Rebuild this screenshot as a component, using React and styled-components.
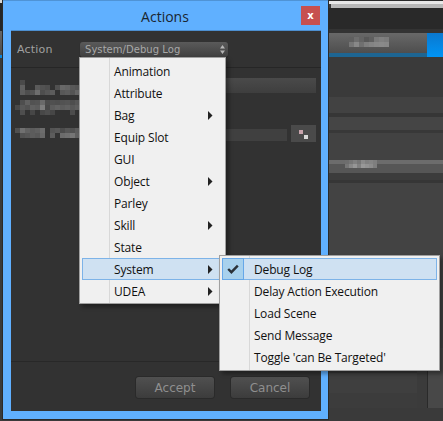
import React from 'react'
import styled, { createGlobalStyle } from 'styled-components'

const menuItems = [
  { label: 'Animation' },
  { label: 'Attribute' },
  { label: 'Bag', sub: true },
  { label: 'Equip Slot' },
  { label: 'GUI' },
  { label: 'Object', sub: true },
  { label: 'Parley' },
  { label: 'Skill', sub: true },
  { label: 'State' },
  { label: 'System', sub: true, active: true },
  { label: 'UDEA', sub: true },
]

const subItems = [
  { label: 'Debug Log', active: true, checked: true },
  { label: 'Delay Action Execution' },
  { label: 'Load Scene' },
  { label: 'Send Message' },
  { label: "Toggle 'can Be Targeted'" },
]

// pixelated (censored) labels, each row is a list of grey values
const labelA = [
  [0, 74, 0, 0, 0, 0, 0, 0, 0, 0, 0, 0, 0, 0, 0, 0],
  [0, 96, 0, 0, 90, 82, 78, 0, 80, 104, 100, 88, 84, 96, 90, 0],
  [0, 92, 78, 84, 110, 78, 86, 92, 0, 88, 92, 84, 100, 92, 112, 72],
]
const labelB = [
  [0, 78, 96, 82, 84, 106, 76, 80, 78, 82, 84, 78, 86, 80, 76, 0],
  [72, 88, 82, 96, 92, 126, 72, 92, 98, 92, 96, 88, 94, 90, 118, 110],
  [0, 78, 0, 70, 0, 72, 78, 70, 0, 0, 0, 76, 0, 0, 0, 0],
]
const labelC = [
  [0, 0, 0, 0, 0, 0, 0, 0, 0, 0, 0, 0, 0, 72, 0, 0],
  [80, 112, 98, 92, 96, 108, 0, 84, 88, 76, 86, 82, 92, 96, 90, 92],
  [0, 82, 86, 92, 88, 104, 0, 92, 0, 108, 112, 118, 96, 108, 102, 96],
]
const blurB = [
  [0, 0, 0, 0, 96, 110, 100, 88, 96, 122, 128, 124, 0, 0, 0, 0],
  [0, 0, 0, 0, 118, 136, 112, 126, 132, 136, 138, 136, 0, 0, 0, 0],
]
const blurC = [
  [0, 0, 0, 0, 110, 118, 128, 118, 138, 128, 132, 126, 0, 0, 0, 0],
  [0, 0, 0, 0, 118, 136, 150, 128, 152, 146, 140, 126, 0, 0, 0, 0],
]

const Mosaic = ({ rows, size = 5 }) => (
  <MosaicSvg width={rows[0].length * size} height={rows.length * size} shapeRendering="crispEdges">
    {rows.map((row, y) =>
      row.map((v, x) =>
        v ? <rect key={x + '-' + y} x={x * size} y={y * size} width={size} height={size} fill={`rgb(${v},${v},${v})`} /> : null
      )
    )}
  </MosaicSvg>
)

const Arrow = () => (
  <ArrowSvg width="5" height="9" viewBox="0 0 5 9">
    <path d="M0 0 L4.5 4.5 L0 9 Z" fill="#222" />
  </ArrowSvg>
)

const Check = () => (
  <svg width="12" height="10" viewBox="0 0 12 10">
    <path d="M1.2 5 L4.4 8.2 L10.8 1.6" fill="none" stroke="#2a3138" strokeWidth="2.4" />
  </svg>
)

const Stepper = () => (
  <svg width="5" height="9" viewBox="0 0 5 9">
    <path d="M2.5 0 L5 3.5 L0 3.5 Z M2.5 9 L5 5.5 L0 5.5 Z" fill="#b5b5b5" />
  </svg>
)

export default function App() {
  return (
    <>
      <GlobalStyle />
      <Desktop>
        <LeftEdge>
          <EdgeLight />
          <EdgeDark />
          <EdgeGray />
          <EdgeBlue />
        </LeftEdge>

        <Window>
          <TitleBar>
            <Title>Actions</Title>
            <CloseButton>x</CloseButton>
          </TitleBar>
          <Content>
            <ActionRow>
              <ActionLabel>Action</ActionLabel>
              <Dropdown>
                <span>System/Debug Log</span>
                <Stepper />
              </Dropdown>
            </ActionRow>
            <Fields>
              <FieldRow>
                <Mosaic rows={labelA} />
                <Field />
              </FieldRow>
              <FieldRow $top={5}>
                <Mosaic rows={labelB} />
              </FieldRow>
              <FieldRow $top={8}>
                <Mosaic rows={labelC} />
                <SmallField />
                <Picker>
                  <PickerDot $c="#c8a4ac" $shift={-2} />
                  <PickerDot $c="#d8d8d8" $shift={3} />
                </Picker>
              </FieldRow>
            </Fields>
            <Footer>
              <GhostButton>Accept</GhostButton>
              <GhostButton>Cancel</GhostButton>
            </Footer>
          </Content>

          <Menu>
            {menuItems.map((item) => (
              <MenuItem key={item.label} $active={item.active}>
                <MenuText>{item.label}</MenuText>
                {item.sub && <Arrow />}
              </MenuItem>
            ))}
          </Menu>

          <SubMenu>
            {subItems.map((item) => (
              <SubItem key={item.label} $active={item.active}>
                <CheckBox $checked={item.checked}>{item.checked && <Check />}</CheckBox>
                <SubText>{item.label}</SubText>
              </SubItem>
            ))}
          </SubMenu>
        </Window>

        <RightPanel>
          <TopStrip />
          <GrayStrip />
          <DarkBand />
          <TabRow>
            <TabMain>
              <TabFace>
                <Mosaic rows={blurB} size={5} />
              </TabFace>
              <TabLine />
            </TabMain>
            <TabBlue />
          </TabRow>
          <Band $h={40} $c="#3a3a3a" />
          <Band $h={16} $c="#424242" />
          <Band $h={4} $c="#363636" />
          <Band $h={13} $c="#454545" />
          <Band $h={3} $c="#383838" />
          <Band $h={27} $c="#424242" />
          <GreyRow>
            <Mosaic rows={blurC} size={4} />
          </GreyRow>
          <Band $h={7} $c="#3c3c3c" />
          <Band $h={3} $c="#363636" />
          <Band $h={165} $c="#434343" />
          <BottomRow>
            <BottomMain>
              <Band $h={25} $c="#353535" />
              <Band $h={20} $c="#3f3f3f" />
            </BottomMain>
            <BottomGap />
            <BottomRail />
          </BottomRow>
        </RightPanel>
      </Desktop>
    </>
  )
}

const GlobalStyle = createGlobalStyle`
  html, body {
    margin: 0;
    padding: 0;
    background: #3a3a3a;
    overflow: hidden;
  }
`

const Desktop = styled.div`
  width: 443px;
  height: 421px;
  display: grid;
  grid-template-columns: 3px 326px 114px;
  align-items: start;
  background: #3a3a3a;
  overflow: hidden;
  position: relative;
`

const LeftEdge = styled.div`
  display: flex;
  flex-direction: column;
`
const EdgeLight = styled.div`
  height: 3px;
  background: #d8d8d8;
`
const EdgeDark = styled.div`
  height: 28px;
  background: #262626;
`
const EdgeGray = styled.div`
  height: 24px;
  background: linear-gradient(#666, #4c4c4c);
`
const EdgeBlue = styled.div`
  height: 3px;
  background: #0a85dc;
`

const Window = styled.div`
  position: relative;
  box-sizing: border-box;
  width: 325px;
  height: 419px;
  display: flex;
  flex-direction: column;
  padding: 0 7px 8px 8px;
  background: #60b0ff;
  border-top: 1px solid #4f93d6;
  box-shadow: 0 0 0 1px #2a2a2a;
`

const TitleBar = styled.div`
  height: 30px;
  flex: none;
  display: flex;
  align-items: center;
  justify-content: space-between;
  position: relative;
`

const Title = styled.div`
  flex: 1;
  text-align: center;
  margin-left: -2px;
  font: 14px "Open Sans", sans-serif;
  color: #1a2530;
`

const CloseButton = styled.div`
  position: absolute;
  right: 1px;
  top: 5px;
  width: 19px;
  height: 19px;
  display: flex;
  align-items: center;
  justify-content: center;
  background: #c75050;
  color: #fff;
  font: bold 10px "DejaVu Sans", sans-serif;
`

const Content = styled.div`
  flex: 1;
  display: flex;
  flex-direction: column;
  background: #323232;
  box-shadow: 0 -1px 0 #4d8fd0;
`

const ActionRow = styled.div`
  height: 37px;
  flex: none;
  box-sizing: border-box;
  display: flex;
  align-items: flex-start;
  padding: 11px 0 0 6px;
  border-bottom: 1px solid #262626;
`

const ActionLabel = styled.div`
  width: 63px;
  font: 11px/15px "DejaVu Sans", sans-serif;
  color: #a0a0a0;
  letter-spacing: 0.2px;
`

const Dropdown = styled.div`
  box-sizing: border-box;
  width: 148px;
  height: 15px;
  display: flex;
  align-items: center;
  justify-content: space-between;
  padding: 0 3px 0 5px;
  border-radius: 3px;
  background: linear-gradient(#5a5a5a, #404040);
  box-shadow: 0 1px 1px #222;
  font: 10px "DejaVu Sans", sans-serif;
  color: #a8a8a8;
  letter-spacing: 0.05px;
`

const Fields = styled.div`
  flex: 1;
  display: flex;
  flex-direction: column;
  padding: 12px 5px 0 4px;
`

const FieldRow = styled.div`
  display: flex;
  align-items: flex-start;
  justify-content: space-between;
  margin-top: ${(p) => p.$top || 0}px;
`

const MosaicSvg = styled.svg`
  display: block;
  flex: none;
`

const Field = styled.div`
  width: 92px;
  height: 15px;
  margin-top: -2px;
  background: linear-gradient(#4a4a4a, #3e3e3e);
`

const SmallField = styled.div`
  width: 62px;
  height: 12px;
  margin: 6px 0 0 auto;
  background: #404040;
`

const Picker = styled.div`
  width: 25px;
  height: 17px;
  margin: 2px 0 0 4px;
  background: #4a4a4a;
  display: flex;
  align-items: center;
  justify-content: center;
  gap: 1px;
`

const PickerDot = styled.div`
  width: 4px;
  height: 4px;
  margin-top: ${(p) => p.$shift * 2}px;
  background: ${(p) => p.$c};
`

const Footer = styled.div`
  flex: none;
  height: 50px;
  box-sizing: border-box;
  display: flex;
  justify-content: flex-end;
  gap: 17px;
  padding: 15px 12px 0 0;
  border-top: 1px solid #282828;
`

const GhostButton = styled.div`
  box-sizing: border-box;
  width: 78px;
  height: 21px;
  display: flex;
  align-items: center;
  justify-content: center;
  border-radius: 3px;
  background: linear-gradient(#505050, #3c3c3c);
  box-shadow: 0 0 0 1px #2a2a2a;
  font: 12px "DejaVu Sans", sans-serif;
  color: #8f8f8f;
`

const Menu = styled.div`
  position: absolute;
  left: 76px;
  top: 56px;
  width: 147px;
  box-sizing: border-box;
  padding: 2px 2px 1px;
  background: #f0f0f0;
  border: 1px solid #a0a0a0;
  box-shadow: 3px 3px 4px rgba(0, 0, 0, 0.35);
  background-image: linear-gradient(#d8d8d8, #d8d8d8);
  background-size: 1px 100%;
  background-position: 29px 0;
  background-repeat: no-repeat;
`

const MenuItem = styled.div`
  box-sizing: border-box;
  height: 22px;
  display: flex;
  align-items: center;
  justify-content: space-between;
  padding: 0 9px 0 31px;
  border: 1px solid ${(p) => (p.$active ? '#7db3e8' : 'transparent')};
  background: ${(p) => (p.$active ? '#cfe1f2' : 'transparent')};
`

const MenuText = styled.span`
  font: 12px "Open Sans", sans-serif;
  letter-spacing: -0.15px;
  color: #101010;
`

const ArrowSvg = styled.svg`
  display: block;
  flex: none;
`

const SubMenu = styled.div`
  position: absolute;
  left: 216px;
  top: 254px;
  width: 221px;
  box-sizing: border-box;
  padding: 2px;
  background: #f0f0f0;
  border: 1px solid #a0a0a0;
  box-shadow: 3px 3px 4px rgba(0, 0, 0, 0.35);
  background-image: linear-gradient(#d8d8d8, #d8d8d8);
  background-size: 1px 100%;
  background-position: 29px 0;
  background-repeat: no-repeat;
`

const SubItem = styled.div`
  box-sizing: border-box;
  height: 22px;
  display: flex;
  align-items: center;
  margin: 0;
  border: 1px solid ${(p) => (p.$active ? '#7db3e8' : 'transparent')};
  background: ${(p) => (p.$active ? '#cfe1f2' : 'transparent')};
`

const CheckBox = styled.div`
  box-sizing: border-box;
  width: 22px;
  height: 22px;
  margin: -1px 10px -1px -1px;
  display: flex;
  align-items: center;
  justify-content: center;
  border: 1px solid ${(p) => (p.$checked ? '#66a7e8' : 'transparent')};
  background: ${(p) => (p.$checked ? '#a8d1ed' : 'transparent')};
`

const SubText = styled.span`
  font: 12px "Open Sans", sans-serif;
  letter-spacing: -0.15px;
  color: #101010;
`

const RightPanel = styled.div`
  display: flex;
  flex-direction: column;
`

const TopStrip = styled.div`
  height: 4px;
  background: linear-gradient(#2a2a2a 1px, #e8e8e8 1px);
`
const GrayStrip = styled.div`
  height: 4px;
  margin-left: 2px;
  background: #b8b8b8;
`
const DarkBand = styled.div`
  height: 25px;
  background: linear-gradient(#292929 21px, #333 21px);
`
const TabRow = styled.div`
  height: 24px;
  display: flex;
`
const TabMain = styled.div`
  flex: 1;
  display: flex;
  flex-direction: column;
`
const TabFace = styled.div`
  flex: 1;
  padding-top: 4px;
  box-sizing: border-box;
  overflow: hidden;
  background: linear-gradient(#686868, #4e4e4e);
`
const TabLine = styled.div`
  height: 4px;
  background: #1d6592;
`
const TabBlue = styled.div`
  width: 16px;
  background: linear-gradient(#0a78cf, #0094f5);
`
const Band = styled.div`
  height: ${(p) => p.$h}px;
  background: ${(p) => p.$c};
`
const GreyRow = styled.div`
  height: 13px;
  background: linear-gradient(#6c6c6c 4px, #565656 4px);
  overflow: hidden;
`
const BottomRow = styled.div`
  height: 60px;
  display: flex;
  background: #3c3c3c;
`
const BottomMain = styled.div`
  width: 88px;
`
const BottomGap = styled.div`
  width: 10px;
  background: #3b3b3b;
`
const BottomRail = styled.div`
  flex: 1;
  border-left: 1px solid #2a2a2a;
  background: #484848;
`
